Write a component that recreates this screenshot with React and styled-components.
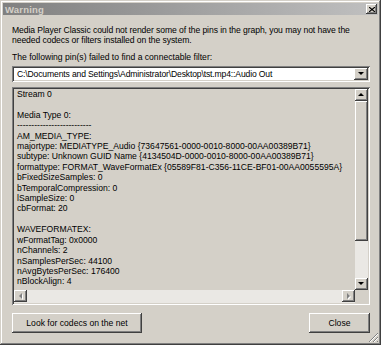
import React from "react";
import styled, { createGlobalStyle } from "styled-components";

const Global = createGlobalStyle`
  html, body {
    margin: 0;
    padding: 0;
    background: #d4d0c8;
  }
  * {
    box-sizing: border-box;
  }
`;

const raised = `
  box-shadow: inset -1px -1px #404040, inset 1px 1px #ffffff,
    inset -2px -2px #808080, inset 2px 2px #d4d0c8;
`;

const sunken = `
  box-shadow: inset 1px 1px #808080, inset -1px -1px #ffffff,
    inset 2px 2px #404040, inset -2px -2px #d4d0c8;
`;

const Window = styled.div`
  position: relative;
  width: 381px;
  height: 345px;
  padding: 3px;
  background: #d4d0c8;
  font-family: "Liberation Sans", Arial, sans-serif;
  font-size: 8.6px;
  color: #000;
  display: flex;
  flex-direction: column;
  box-shadow: inset -1px -1px #404040, inset 1px 1px #d4d0c8,
    inset -2px -2px #808080, inset 2px 2px #ffffff;
`;

const TitleBar = styled.div`
  height: 13px;
  display: flex;
  align-items: center;
  justify-content: space-between;
  padding: 0 1px 0 2px;
  background: linear-gradient(to right, #808080, #c0c0c0);
`;

const Title = styled.span`
  font-weight: bold;
  font-size: 9.5px;
  color: #d4d0c8;
  letter-spacing: 0.2px;
`;

const CloseBox = styled.div`
  width: 11px;
  height: 10px;
  background: #d4d0c8;
  display: flex;
  align-items: center;
  justify-content: center;
  ${raised}
`;

const Body = styled.div`
  flex: 1;
  display: flex;
  flex-direction: column;
  padding: 10px 8px 9px 9px;
`;

const Message = styled.p`
  margin: 0 0 6px;
  line-height: 10.3px;
  white-space: nowrap;
  letter-spacing: -0.08px;
`;

const Label = styled.div`
  line-height: 10.3px;
  margin-bottom: 4px;
`;

const Combo = styled.div`
  height: 16px;
  background: #fff;
  display: flex;
  align-items: center;
  padding: 2px;
  ${sunken}
`;

const ComboText = styled.span`
  flex: 1;
  padding-left: 3px;
  white-space: nowrap;
  overflow: hidden;
  letter-spacing: -0.15px;
`;

const ArrowButton = styled.div`
  width: ${(p) => p.$w || 13}px;
  height: ${(p) => p.$h || 12}px;
  flex: none;
  background: #d4d0c8;
  display: flex;
  align-items: center;
  justify-content: center;
  ${raised}
`;

const TextBox = styled.div`
  margin-top: 5px;
  height: 218px;
  padding: 2px;
  background: #d4d0c8;
  display: grid;
  grid-template-columns: 1fr 13px;
  grid-template-rows: 1fr 13px;
  ${sunken}
`;

const Lines = styled.div`
  padding: 0 0 0 3px;
  white-space: pre;
  line-height: 10.4px;
  overflow: hidden;
`;

const VScroll = styled.div`
  display: flex;
  flex-direction: column;
  background: #eae8e4;
`;

const Thumb = styled.div`
  height: 140px;
  background: #d4d0c8;
  ${raised}
`;

const Track = styled.div`
  flex: 1;
`;

const HScroll = styled.div`
  display: flex;
  background: #eae8e4;
`;

const Corner = styled.div`
  background: #d4d0c8;
`;

const Footer = styled.div`
  margin-top: 8px;
  display: flex;
  justify-content: space-between;
  align-items: center;
`;

const Button = styled.div`
  width: ${(p) => p.$w}px;
  height: 20px;
  display: flex;
  align-items: center;
  justify-content: center;
  background: #d4d0c8;
  padding-bottom: 1px;
  ${raised}
`;

const Grip = styled.svg`
  position: absolute;
  right: 2px;
  bottom: 2px;
`;

const Arrow = ({ dir, disabled }) => {
  const pts = {
    down: "0,0 6,0 3,3",
    up: "0,3 6,3 3,0",
    left: "3,0 3,6 0,3",
    right: "0,0 0,6 3,3",
  }[dir];
  const vertical = dir === "up" || dir === "down";
  return (
    <svg width={vertical ? 7 : 4} height={vertical ? 4 : 7} viewBox={vertical ? "0 0 7 4" : "0 0 4 7"}>
      {disabled && (
        <polygon points={pts} fill="#ffffff" transform="translate(1,1)" />
      )}
      <polygon points={pts} fill={disabled ? "#808080" : "#000"} />
    </svg>
  );
};

const lines = [
  "Stream 0",
  "",
  "Media Type 0:",
  "--------------------------",
  "AM_MEDIA_TYPE:",
  "majortype: MEDIATYPE_Audio {73647561-0000-0010-8000-00AA00389B71}",
  "subtype: Unknown GUID Name {4134504D-0000-0010-8000-00AA00389B71}",
  "formattype: FORMAT_WaveFormatEx {05589F81-C356-11CE-BF01-00AA0055595A}",
  "bFixedSizeSamples: 0",
  "bTemporalCompression: 0",
  "lSampleSize: 0",
  "cbFormat: 20",
  "",
  "WAVEFORMATEX:",
  "wFormatTag: 0x0000",
  "nChannels: 2",
  "nSamplesPerSec: 44100",
  "nAvgBytesPerSec: 176400",
  "nBlockAlign: 4",
];

const App = () => {
  return (
    <>
      <Global />
      <Window>
        <TitleBar>
          <Title>Warning</Title>
          <CloseBox>
            <svg width="6" height="5" viewBox="0 0 6 5">
              <path d="M0 0 L6 5 M6 0 L0 5" stroke="#000" strokeWidth="1.1" />
            </svg>
          </CloseBox>
        </TitleBar>
        <Body>
          <Message>
            Media Player Classic could not render some of the pins in the graph, you may not have the
            <br />
            needed codecs or filters installed on the system.
          </Message>
          <Label>The following pin(s) failed to find a connectable filter:</Label>
          <Combo>
            <ComboText>
              C:\Documents and Settings\Administrator\Desktop\tst.mp4::Audio Out
            </ComboText>
            <ArrowButton $w={14} $h={12}>
              <Arrow dir="down" />
            </ArrowButton>
          </Combo>
          <TextBox>
            <Lines>{lines.join("\n")}</Lines>
            <VScroll>
              <ArrowButton>
                <Arrow dir="up" />
              </ArrowButton>
              <Thumb />
              <Track />
              <ArrowButton>
                <Arrow dir="down" />
              </ArrowButton>
            </VScroll>
            <HScroll>
              <ArrowButton>
                <Arrow dir="left" disabled />
              </ArrowButton>
              <Track />
              <ArrowButton>
                <Arrow dir="right" disabled />
              </ArrowButton>
            </HScroll>
            <Corner />
          </TextBox>
          <Footer>
            <Button $w={130}>Look for codecs on the net</Button>
            <Button $w={61}>Close</Button>
          </Footer>
        </Body>
        <Grip width="11" height="11" viewBox="0 0 11 11">
          <path d="M10 1 L1 10 M10 5 L5 10 M10 9 L9 10" stroke="#808080" strokeWidth="1" />
          <path d="M10 2 L2 10 M10 6 L6 10" stroke="#ffffff" strokeWidth="1" />
        </Grip>
      </Window>
    </>
  );
};

export default App;
